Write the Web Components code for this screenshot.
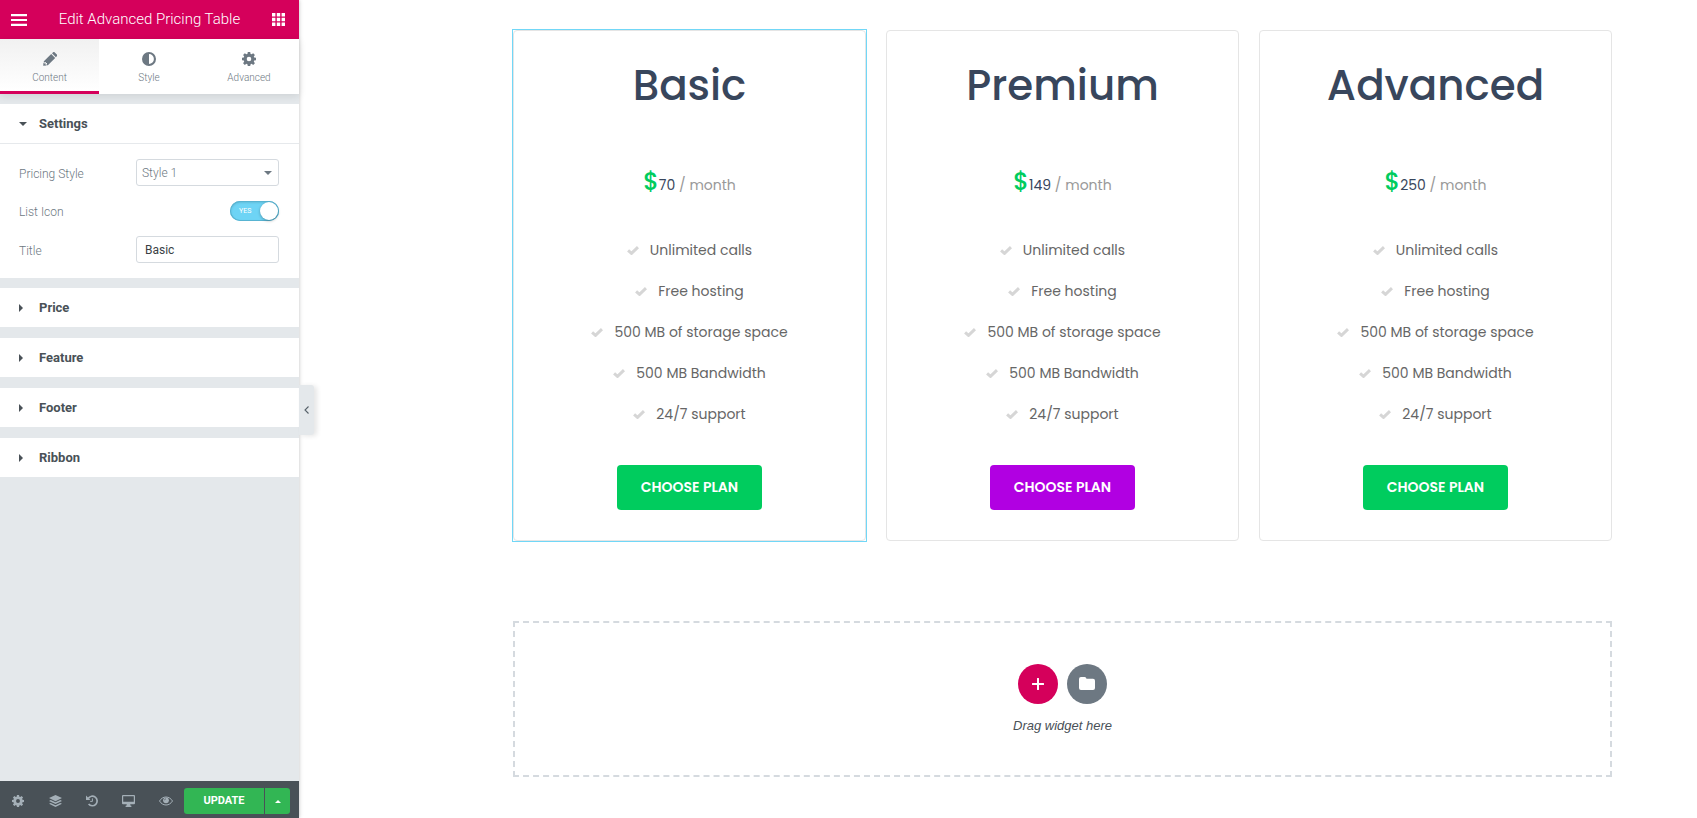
<!DOCTYPE html>
<html lang="en">
<head>
<meta charset="utf-8">
<title>Edit Advanced Pricing Table</title>
<style>
html, body { height: 100%; margin: 0; }
body { font-family: Roboto, "Liberation Sans", sans-serif; background: #fff; color: #495157; }
</style>
</head>
<body>
<editor-shell>
  <editor-panel slot="panel" heading="Edit Advanced Pricing Table">
    <panel-tab slot="tabs" icon="pencil" active>Content</panel-tab>
    <panel-tab slot="tabs" icon="contrast">Style</panel-tab>
    <panel-tab slot="tabs" icon="gear">Advanced</panel-tab>
    <panel-section heading="Settings" open>
      <select-control label="Pricing Style" value="Style 1"></select-control>
      <switch-control label="List Icon"></switch-control>
      <text-control label="Title" value="Basic"></text-control>
    </panel-section>
    <panel-section heading="Price"></panel-section>
    <panel-section heading="Feature"></panel-section>
    <panel-section heading="Footer"></panel-section>
    <panel-section heading="Ribbon"></panel-section>
    <panel-footer slot="footer"></panel-footer>
  </editor-panel>
  <pricing-card selected heading="Basic" price="70"></pricing-card>
  <pricing-card heading="Premium" price="149" accent="#b100e2"></pricing-card>
  <pricing-card heading="Advanced" price="250"></pricing-card>
  <drop-zone slot="drop">Drag widget here</drop-zone>
</editor-shell>

<script>
const ICONS = {
  pencil: ['0 0 14 14', '<path d="M.2 13.8.5 10.4 3.8 13.5z M.6 9.6 8.2 2l4 4-7.6 7.6z M9 1.3 9.900.4a1.3 1.3 0 0 1 1.9 0l2 2a1.3 1.3 0 0 1 0 1.900L12.9 5.2z"/><path d="M2.2 10.2 4 12" stroke="#fafafa" stroke-width="1"/>'],
  contrast: ['0 0 14 14', '<path fill-rule="evenodd" d="M7 0a7 7 0 1 0 0 14A7 7 0 0 0 7 0zm0 2.1a4.9 4.9 0 0 1 0 9.8z"/>'],
  gear: ['0 0 14 14', '<path fill-rule="evenodd" d="M5.8 0h2.4l.4 1.9 1 .4 1.6-1.1 1.7 1.7-1.1 1.6.4 1 1.8.3v2.4l-1.8.4-.4 1 1.1 1.6-1.7 1.7-1.6-1.1-1 .4-.4 1.8H5.8l-.4-1.8-1-.4-1.6 1.1-1.7-1.7 1.1-1.6-.4-1L0 8.2V5.8l1.8-.3.4-1-1.1-1.6 1.7-1.7 1.6 1.1 1-.4zM7 4.7a2.3 2.3 0 1 0 0 4.6 2.3 2.3 0 0 0 0-4.6z"/>'],
  menu: ['0 0 16 12', '<path d="M0 0h16v2.2H0zM0 4.9h16v2.2H0zM0 9.8h16V12H0z"/>'],
  grid: ['0 0 13 13', '<path d="M0 0h3.4v3.4H0zM4.8 0h3.4v3.4H4.8zM9.6 0H13v3.4H9.6zM0 4.8h3.4v3.4H0zM4.8 4.8h3.4v3.4H4.8zM9.6 4.8H13v3.4H9.6zM0 9.6h3.4V13H0zM4.8 9.6h3.4V13H4.8zM9.6 9.6H13V13H9.6z"/>'],
  down: ['0 0 8 4', '<path d="M0 0h8L4 4z"/>'],
  up: ['0 0 8 4', '<path d="M0 4h8L4 0z"/>'],
  right: ['0 0 4 8', '<path d="M0 0l4 4-4 4z"/>'],
  left: ['0 0 5 8', '<path d="M4.5.5 1 4l3.5 3.5" fill="none" stroke="currentColor" stroke-width="1.1"/>'],
  layers: ['0 0 13 12', '<path d="M6.5 0 13 3.1 6.5 6.2 0 3.1zM1.7 5 6.5 7.3 11.3 5 13 5.9 6.5 9 0 5.9zM1.7 7.9 6.5 10.2 11.3 7.9 13 8.8 6.5 12 0 8.8z"/>'],
  history: ['0 0 12 12', '<path d="M2.2 3.5A4.8 4.8 0 1 1 2.6 9" fill="none" stroke="currentColor" stroke-width="1.7"/><path d="M0 .6V5h4.4z"/><path d="M6.4 3.4v3H4.2" fill="none" stroke="currentColor" stroke-width="1"/>'],
  monitor: ['0 0 13 12', '<path fill-rule="evenodd" d="M1 0h11a1 1 0 0 1 1 1v7.3a1 1 0 0 1-1 1H8.2l.4 1.5h.8V12H3.6v-1.2h.8l.4-1.5H1a1 1 0 0 1-1-1V1a1 1 0 0 1 1-1zm.2 1.2v5.6h10.6V1.2z"/>'],
  eye: ['0 0 14 10', '<path d="M.5 5C2 2.5 4.3 1 7 1s5 1.5 6.5 4C12 7.5 9.7 9 7 9S2 7.5.5 5z" fill="none" stroke="currentColor"/><circle cx="7" cy="4.3" r="2.9"/><path d="M5.5 4.3A1.5 1.5 0 0 1 7 2.8" fill="none" stroke="#495157" stroke-width=".6"/>'],
  check: ['0 0 12 9', '<path d="M1.1 4.4 4.5 7.4 11 1.2" fill="none" stroke="currentColor" stroke-width="3"/>'],
  plus: ['0 0 12 12', '<path d="M6 .8v10.4M.8 6h10.4" stroke="currentColor" stroke-width="2" stroke-linecap="round"/>'],
  folder: ['0 0 16 13', '<path d="M2 0h3.5a2 2 0 0 1 2 1.8H14a2 2 0 0 1 2 2V11a2 2 0 0 1-2 2H2a2 2 0 0 1-2-2V2a2 2 0 0 1 2-2z"/>']
};
const icon = name => {
  const [box, body] = ICONS[name];
  const [, , w, h] = box.split(' ');
  return `<svg viewBox="${box}" width="${w}" height="${h}" fill="currentColor" aria-hidden="true">${body}</svg>`;
};
const BASE = `<style>
  :host, * { box-sizing: border-box; }
  svg { display: block; flex: none; }
  button, input, select { font: inherit; color: inherit; }
  button { border: 0; padding: 0; margin: 0; background: none; cursor: pointer; display: flex; align-items: center; justify-content: center; }
</style>`;
class Base extends HTMLElement {
  connectedCallback() {
    if (this.shadowRoot) return;
    this.attachShadow({ mode: 'open' }).innerHTML = BASE + this.render();
  }
  attr(name, fallback = '') { return this.getAttribute(name) ?? fallback; }
}

class EditorShell extends Base {
  render() {
    return `<style>
      :host { display: grid; grid-template-columns: 299px minmax(0, 1fr); min-height: 100%; }
      main { padding: 30px 85px 40px 214px; }
      .cards { display: grid; grid-template-columns: repeat(3, minmax(0, 1fr)); gap: 20px; margin-bottom: 80px; }
    </style>
    <slot name="panel"></slot>
    <main><div class="cards"><slot></slot></div><slot name="drop"></slot></main>`;
  }
}

class EditorPanel extends Base {
  render() {
    return `<style>
      :host { display: flex; flex-direction: column; position: relative; min-height: 100vh; background: #e4e8eb; box-shadow: 0 0 4px rgba(0,0,0,.25); }
      header { display: flex; align-items: center; justify-content: space-between; height: 39px; padding: 0 14px 0 11px; background: #d5005b; color: #fff; }
      h1 { margin: 0; padding-bottom: 2px; font-size: 15px; font-weight: 300; line-height: 20px; }
      nav { display: grid; grid-template-columns: 99px 1fr 1fr; background: #fff; box-shadow: 0 2px 8px rgba(0,0,0,.1); }
      .sections { flex: 1; display: flex; flex-direction: column; gap: 11px; padding-top: 10px; }
      .collapse { position: absolute; left: 100%; top: 50%; margin-top: -24px; width: 15px; height: 50px; background: #e4e8eb; color: #556068; border-radius: 0 3px 3px 0; box-shadow: 3px 1px 5px rgba(0,0,0,.1); }
    </style>
    <header>
      <button aria-label="Menu">${icon('menu')}</button>
      <h1>${this.attr('heading')}</h1>
      <button aria-label="Widgets">${icon('grid')}</button>
    </header>
    <nav><slot name="tabs"></slot></nav>
    <div class="sections"><slot></slot></div>
    <slot name="footer"></slot>
    <button class="collapse" aria-label="Collapse panel">${icon('left')}</button>`;
  }
}

class PanelTab extends Base {
  render() {
    return `<style>
      :host { display: block; }
      button { flex-direction: column; justify-content: flex-start; gap: 5px; width: 100%; height: 55px; padding-top: 13px; font-size: 10px; font-weight: 300; line-height: 14px; border-bottom: 3px solid transparent; color: #6d7882; }
      :host([active]) button { background: linear-gradient(#f1f1f1, #fff); border-bottom-color: #d5005b; }
    </style>
    <button>${icon(this.attr('icon'))}<span><slot></slot></span></button>`;
  }
}

class PanelSection extends Base {
  render() {
    const open = this.hasAttribute('open');
    return `<style>
      :host { display: block; background: #fff; }
      :host([open]) { margin-bottom: -1px; }
      h2 { margin: 0; }
      button { justify-content: flex-start; width: 100%; height: 39px; padding-left: 19px; font-size: 13px; font-weight: 700; line-height: 20px; color: #495157; }
      i { width: 20px; }
      .body { display: grid; gap: 15px; border-top: 1px solid #e6e9ec; padding: 15px 20px 15px 19px; }
    </style>
    <h2><button aria-expanded="${open}"><i>${icon(open ? 'down' : 'right')}</i>${this.attr('heading')}</button></h2>
    ${open ? '<div class="body"><slot></slot></div>' : ''}`;
  }
}

const FIELD = `<style>
  :host { display: flex; align-items: center; justify-content: space-between; font-size: 12px; line-height: 16px; color: #6d7882; }
  label { padding-top: 2px; font-weight: 300; }
  .box { width: 143px; height: 27px; margin: 0; border: 1px solid #d5dadf; border-radius: 3px; background: #fff; }
</style>`;
class SelectControl extends Base {
  render() {
    return FIELD + `<style>
      .wrap { position: relative; display: flex; }
      select { appearance: none; padding: 1px 5px 0; font-weight: 300; }
      svg { position: absolute; right: 7px; top: 12px; pointer-events: none; }
    </style>
    <label for="f">${this.attr('label')}</label>
    <span class="wrap"><select class="box" id="f"><option>${this.attr('value')}</option></select>${icon('down')}</span>`;
  }
}
class TextControl extends Base {
  render() {
    return FIELD + `<style>input { padding: 0 8px; color: #3a3f45; }</style>
    <label for="f">${this.attr('label')}</label>
    <input class="box" id="f" type="text" value="${this.attr('value')}">`;
  }
}
class SwitchControl extends Base {
  render() {
    return FIELD + `<style>
      .switch { position: relative; display: flex; align-items: center; justify-content: space-between; width: 49px; height: 20px; padding: 1px 1px 1px 9px; border-radius: 10px; background: #6ed4f5; box-shadow: inset 0 0 0 1px #58b4d2, inset 0 1px 3px rgba(0,0,0,.2); font-size: 7px; line-height: 10px; color: #fff; }
      .knob { width: 18px; height: 18px; border-radius: 50%; background: #fff; box-shadow: 0 1px 3px rgba(0,0,0,.3); }
      input { position: absolute; inset: 0; width: 100%; height: 100%; margin: 0; opacity: 0; }
    </style>
    <label for="f">${this.attr('label')}</label>
    <span class="switch"><span>YES</span><span class="knob"></span><input id="f" type="checkbox" checked></span>`;
  }
}

class PanelFooter extends Base {
  render() {
    const tools = [['gear', 'Settings'], ['layers', 'Navigator'], ['history', 'History'], ['monitor', 'Responsive mode'], ['eye', 'Preview']];
    return `<style>
      :host { display: flex; height: 37px; padding: 7px 9px 4px 0; background: #495157; color: #a4afb7; }
      .tools { flex: 1; display: flex; }
      .tools button { flex: 1; }
      .tools button:first-child svg { width: 12px; height: 12px; }
      .save { display: flex; gap: 1px; color: #fff; }
      .save button { background: #32b654; }
      .update { width: 80px; border-radius: 3px 0 0 3px; font-size: 11px; font-weight: 700; line-height: 16px; }
      .more { width: 25px; border-radius: 0 3px 3px 0; }
      .more svg { width: 6px; height: 3px; }
    </style>
    <div class="tools">${tools.map(([i, l]) => `<button aria-label="${l}">${icon(i)}</button>`).join('')}</div>
    <div class="save"><button class="update">UPDATE</button><button class="more" aria-label="Save options">${icon('up')}</button></div>`;
  }
}

class PricingCard extends Base {
  render() {
    const features = ['Unlimited calls', 'Free hosting', '500 MB of storage space', '500 MB Bandwidth', '24/7 support'];
    return `<style>
      :host { display: flex; flex-direction: column; align-items: center; position: relative; padding: 28px 29px 30px; border: 1px solid #e5e5e5; border-radius: 4px; font-family: Poppins, Inter, sans-serif; font-size: 14px; line-height: 21px; }
      :host([selected])::after { content: ""; position: absolute; inset: -2px; border: 1px solid #71d7f7; pointer-events: none; }
      h3 { margin: 0 0 54px; font-size: 42px; font-weight: 500; line-height: 54px; color: #38465c; }
      .price { margin: 0 0 40px; line-height: 30px; color: #38465c; }
      .currency { font-size: 24px; font-weight: 500; color: #00cc5e; }
      .period { color: #999; }
      ul { list-style: none; margin: 0 0 40px; padding: 0; display: grid; gap: 20px; color: #666; }
      li { display: flex; align-items: center; justify-content: center; gap: 11px; }
      li svg { color: #d6d6d6; }
      button { width: 145px; height: 45px; border-radius: 4px; background: ${this.attr('accent', '#00cc5e')}; color: #fff; font-size: 14px; font-weight: 600; line-height: 21px; }
    </style>
    <h3>${this.attr('heading')}</h3>
    <p class="price"><span class="currency">$</span>${this.attr('price')} <span class="period">/ month</span></p>
    <ul>${features.map(f => `<li>${icon('check')}<span>${f}</span></li>`).join('')}</ul>
    <button>CHOOSE PLAN</button>`;
  }
}

class DropZone extends Base {
  render() {
    return `<style>
      :host { display: flex; flex-direction: column; align-items: center; justify-content: center; gap: 13px; height: 156px; border: 2px dashed #d5dadf; font: italic 13px/18px "Liberation Sans", sans-serif; color: #495157; }
      .actions { display: flex; gap: 9px; }
      button { width: 40px; height: 40px; border-radius: 50%; background: #d5005b; color: #fff; }
      button + button { background: #6d7882; }
    </style>
    <div class="actions"><button aria-label="Add section">${icon('plus')}</button><button aria-label="Add template">${icon('folder')}</button></div>
    <div><slot></slot></div>`;
  }
}

customElements.define('editor-shell', EditorShell);
customElements.define('editor-panel', EditorPanel);
customElements.define('panel-tab', PanelTab);
customElements.define('panel-section', PanelSection);
customElements.define('select-control', SelectControl);
customElements.define('switch-control', SwitchControl);
customElements.define('text-control', TextControl);
customElements.define('panel-footer', PanelFooter);
customElements.define('pricing-card', PricingCard);
customElements.define('drop-zone', DropZone);
</script>
</body>
</html>
